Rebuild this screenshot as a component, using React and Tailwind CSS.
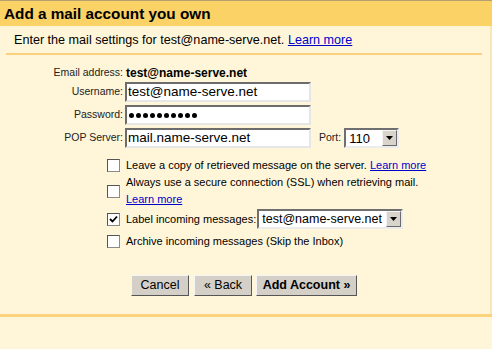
import React from "react";

const font = { fontFamily: '"Liberation Sans", Arial, sans-serif' };

const Checkbox = ({ checked }) => (
    <span className="w-[13px] h-[13px] shrink-0 bg-white border border-[#8a8a8a] border-t-[#555] border-l-[#555] flex items-center justify-center">
        {checked && (
            <svg width="9" height="9" viewBox="0 0 9 9">
                <path d="M1 4 L3.5 6.5 L8 1.5" stroke="#000" strokeWidth="1.8" fill="none" />
            </svg>
        )}
    </span>
);

const Select = ({ value, width, size }) => (
    <div className={`${width} h-[20px] bg-white border-2 border-t-[#6f6f6f] border-l-[#6f6f6f] border-b-[#ececec] border-r-[#ececec] flex items-center`}>
        <span className={`flex-1 pl-[3px] ${size} leading-none text-black whitespace-nowrap overflow-hidden`}>{value}</span>
        <span className="w-[15px] h-[16px] bg-[#d8d4cc] border border-t-[#f4f4f4] border-l-[#f4f4f4] border-b-[#6a6a6a] border-r-[#6a6a6a] flex items-center justify-center">
            <svg width="7" height="4" viewBox="0 0 7 4"><path d="M0 0 H7 L3.5 4 Z" fill="#000" /></svg>
        </span>
    </div>
);

const Input = ({ children }) => (
    <div className="w-[186px] h-[20px] bg-white border-2 border-t-[#6c6c6c] border-l-[#6c6c6c] border-b-[#e6e6e6] border-r-[#e6e6e6] flex items-center px-[1px] text-[13.5px] leading-none text-black">
        {children}
    </div>
);

const Button = ({ children, bold, width }) => (
    <button className={`${width} h-[21px] bg-[#d4d0c8] border border-t-[#f5f5f5] border-l-[#f5f5f5] border-b-[#555] border-r-[#555] text-[12.5px] leading-none text-black ${bold ? "font-bold" : ""}`}>
        {children}
    </button>
);

const dots = Array.from({ length: 10 });

export default function App() {
    return (
        <div className="w-[492px] h-[349px] bg-[#fff6d9] overflow-hidden text-[#222]" style={font}>
            <div className="h-[1px] bg-[#b59f6f]" />
            {/* header band */}
            <div className="h-[25px] bg-[#fad266] flex items-center pl-[4px]">
                <h1 className="text-[15.3px] font-bold text-black leading-none">Add a mail account you own</h1>
            </div>

            <div className="h-[288px] border-r-2 border-[#f6e7b8] flex flex-col">
                <div className="pt-[7px] pl-[14px] text-[12.6px] text-black leading-[14px]">
                    Enter the mail settings for test@name-serve.net. <a className="text-[#0000cc] underline">Learn more</a>
                </div>
                <div className="mt-[6px] ml-[6px] mr-[8px] h-[2px] bg-[#fbd07d]" />

                {/* settings */}
                <div className="mt-[12px] flex flex-col gap-[3px] text-[10.5px]">
                    <div className="flex items-center h-[12px]">
                        <span className="w-[126px] text-right pr-[3px]">Email address:</span>
                        <span className="font-bold text-black text-[12px]">test@name-serve.net</span>
                    </div>
                    <div className="flex items-center">
                        <span className="w-[125px] text-right pr-[2px]">Username:</span>
                        <Input>test@name-serve.net</Input>
                    </div>
                    <div className="flex items-center">
                        <span className="w-[125px] text-right pr-[2px]">Password:</span>
                        <Input>
                            <span className="flex gap-[2px] pl-[1px]">
                                {dots.map((_, i) => (
                                    <span key={i} className="w-[5px] h-[5px] rounded-full bg-black" />
                                ))}
                            </span>
                        </Input>
                    </div>
                    <div className="flex items-center">
                        <span className="w-[125px] text-right pr-[2px]">POP Server:</span>
                        <Input>mail.name-serve.net</Input>
                        <span className="ml-[8px] mr-[3px]">Port:</span>
                        <Select value="110" width="w-[55px]" size="text-[13px]" />
                    </div>
                </div>

                {/* options */}
                <div className="mt-[8px] pl-[107px] flex flex-col text-[11px] text-black">
                    <div className="flex items-center gap-[6px] h-[18px]">
                        <Checkbox />
                        <span>Leave a copy of retrieved message on the server. <a className="text-[#0000cc] underline">Learn more</a></span>
                    </div>
                    <div className="flex items-center gap-[6px]">
                        <Checkbox />
                        <span className="leading-[17px]">
                            Always use a secure connection (SSL) when retrieving mail.
                            <br />
                            <a className="text-[#0000cc] underline">Learn more</a>
                        </span>
                    </div>
                    <div className="flex items-center h-[22px]">
                        <Checkbox checked />
                        <span className="ml-[6px] mr-[1px]">Label incoming messages:</span>
                        <Select value="test@name-serve.net" width="w-[146px]" size="text-[12.5px]" />
                    </div>
                    <div className="flex items-center gap-[6px] h-[18px] mt-[2px]">
                        <Checkbox />
                        <span>Archive incoming messages (Skip the Inbox)</span>
                    </div>
                </div>

                <div className="mt-[25px] pl-[131px] flex">
                    <Button width="w-[58px]">Cancel</Button>
                    <span className="w-[5px]" />
                    <Button width="w-[58px]">« Back</Button>
                    <span className="w-[4px]" />
                    <Button width="w-[101px]" bold>Add Account »</Button>
                </div>
            </div>
            <div className="h-[3px] bg-[#fcd37c]" />
        </div>
    );
}
